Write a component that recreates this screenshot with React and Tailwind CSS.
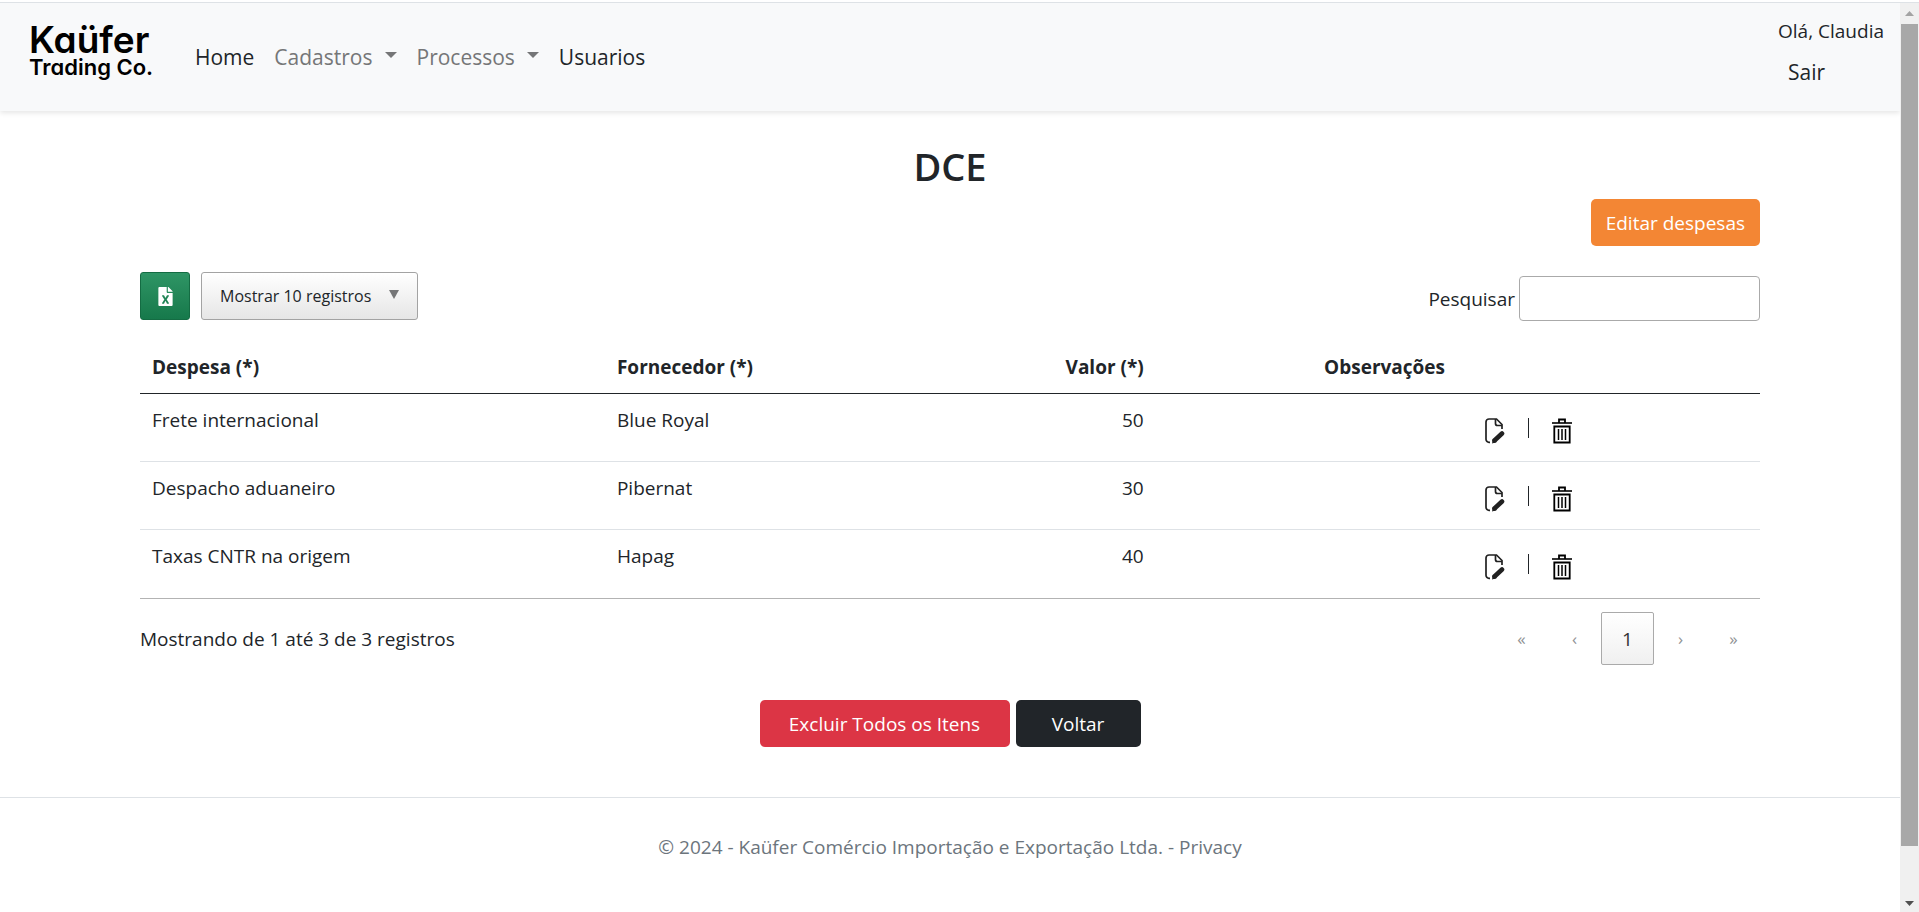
import { FaFileExcel } from "react-icons/fa";

const rows = [
  ["Frete internacional", "Blue Royal", 50],
  ["Despacho aduaneiro", "Pibernat", 30],
  ["Taxas CNTR na origem", "Hapag", 40],
];

function Logo() {
  return (
    <a href="#inicio" className="flex w-[124px] flex-col font-['Inter',sans-serif] font-semibold whitespace-nowrap text-black [font-feature-settings:'cv11']">
      <span className="text-[37px] leading-[32px]">Kaüfer</span>
      <span className="text-[22px] leading-[22px]">Trading Co.</span>
    </a>
  );
}

function Caret() {
  return (
    <svg width="12" height="6" viewBox="0 0 12 6" className="mb-1" aria-hidden="true">
      <path d="M0 0h12L6 6z" fill="currentColor" />
    </svg>
  );
}

function EditIcon() {
  return (
    <svg width="20" height="26" viewBox="0 0 20 26" fill="none" stroke="#212121" aria-hidden="true">
      <path d="M5 24.300H4A3 3 0 0 1 1 21.300V4A3 3 0 0 1 4 1H11.500L17 6.500V11" strokeWidth="1.700" />
      <path d="M10.500 1V5.500A2 2 0 0 0 12.500 7.500H17" strokeWidth="1.700" />
      <path d="M9.500 22.500L17 15.500" strokeWidth="4.600" strokeLinecap="round" />
      <path d="M7 25.500L8 20.500L12 24Z" fill="#212121" stroke="none" />
    </svg>
  );
}

function TrashIcon() {
  return (
    <svg width="20" height="26" viewBox="0 0 20 26" fill="none" stroke="#000" aria-hidden="true">
      <path d="M0 5H20" strokeWidth="1.600" />
      <path d="M7 5V1.500H13V5" strokeWidth="1.800" />
      <path d="M2.300 8.500H17.700V24.500H2.300Z" strokeWidth="1.800" />
      <path d="M6.500 11V22M10 11V22M13.500 11V22" strokeWidth="1.500" />
    </svg>
  );
}

export default function App() {
  return (
    <div className="flex h-screen flex-col overflow-hidden bg-white font-['Open_Sans',sans-serif] text-[19px] leading-[30px] text-[#212529]">
      <div className="mt-[2px] flex min-h-0 flex-1 border-t border-[#dee2e6]">
        <div className="min-w-0 flex-1 overflow-hidden">
          <header className="flex h-[108px] items-start justify-between bg-[#f8f9fa] shadow-[0_2px_5px_rgba(0,0,0,0.1)]">
            <div className="flex items-start pt-[21px] pl-[29px]">
              <Logo />
              <nav className="mt-[18px] ml-[32px] flex items-center text-[21px]">
                <a href="#home" className="px-[10px]">Home</a>
                <button type="button" className="flex items-center gap-[12px] px-[10px] text-[#757677]">Cadastros <Caret /></button>
                <button type="button" className="flex items-center gap-[12px] px-[10px] text-[#757677]">Processos <Caret /></button>
                <a href="#usuarios" className="px-[10px]">Usuarios</a>
              </nav>
            </div>
            <div className="pt-[13px] pr-[16px]">
              <p>Olá, Claudia</p>
              <a href="#sair" className="mt-[11px] block px-[10px] text-[21px]">Sair</a>
            </div>
          </header>

          <main className="mx-auto max-w-[1650px] px-[15px] pt-[31px]">
            <h1 className="text-center text-[38px] leading-[48px] font-semibold">DCE</h1>
            <div className="mt-[9px] flex justify-end">
              <button type="button" className="h-[47px] rounded-[5px] bg-[#f38634] px-[15px] text-white">Editar despesas</button>
            </div>

            <div className="mt-[26px] flex items-start justify-between">
              <div className="flex gap-[11px]">
                <button type="button" aria-label="Exportar para Excel" className="flex h-[48px] w-[50px] items-center justify-center rounded-[3px] border border-[#146c43] bg-linear-to-b from-[#2e9565] to-[#16794b] text-white">
                  <FaFileExcel size={19} />
                </button>
                <button type="button" className="flex h-[48px] w-[217px] items-center justify-between rounded-[3px] border border-[#a3a3a3] bg-linear-to-b from-white to-[#e6e6e6] px-[18px] text-[16px]">
                  Mostrar 10 registros
                  <svg width="10" height="9" viewBox="0 0 10 9" className="mb-[3px]" aria-hidden="true"><path d="M0 0h10L5 9z" fill="#757677" /></svg>
                </button>
              </div>
              <div className="mt-[4px] flex items-center gap-[4px]">
                <label htmlFor="pesquisar">Pesquisar</label>
                <input id="pesquisar" type="search" className="h-[45px] w-[241px] rounded-[4px] border border-[#aaa] bg-transparent px-[6px]" />
              </div>
            </div>

            <table className="mt-[20px] w-full table-fixed border-separate border-spacing-0 border-b border-[#b3b3b3]">
              <colgroup>
                <col className="w-[28.7%]" />
                <col className="w-[21.6%]" />
                <col className="w-[12.4%]" />
                <col className="w-[18.6%]" />
                <col />
              </colgroup>
              <thead>
                <tr className="h-[53px] text-left *:border-b *:border-[#212529] *:px-[12px] *:font-bold">
                  <th>Despesa (*)</th>
                  <th>Fornecedor (*)</th>
                  <th className="text-right">Valor (*)</th>
                  <th className="text-right">Observações</th>
                  <th aria-label="Ações"></th>
                </tr>
              </thead>
              <tbody>
                {rows.map(([despesa, fornecedor, valor]) => (
                  <tr key={despesa} className="h-[68px] align-top *:border-b *:border-[#dee2e6] last:*:border-b-0">
                    <td className="px-[12px] pt-[11px]">{despesa}</td>
                    <td className="px-[12px] pt-[11px]">{fornecedor}</td>
                    <td className="px-[12px] pt-[11px] text-right">{valor}</td>
                    <td></td>
                    <td className="pt-[24px] pl-[28px]">
                      <div className="flex items-start">
                        <a href="#editar" aria-label="Editar"><EditIcon /></a>
                        <span className="mx-[23px] h-[20px] w-px bg-[#212529]" />
                        <a href="#excluir" aria-label="Excluir"><TrashIcon /></a>
                      </div>
                    </td>
                  </tr>
                ))}
              </tbody>
            </table>

            <div className="mt-[13px] flex items-center justify-between">
              <p>Mostrando de 1 até 3 de 3 registros</p>
              <nav aria-label="Paginação" className="flex text-[17px] text-[#909294]">
                <button type="button" className="size-[53px]">«</button>
                <button type="button" className="size-[53px]">‹</button>
                <button type="button" className="size-[53px] rounded-[2px] border border-[#aaa] bg-linear-to-b from-white to-[#f0f0f0] text-[19px] text-[#333]">1</button>
                <button type="button" className="size-[53px]">›</button>
                <button type="button" className="size-[53px]">»</button>
              </nav>
            </div>

            <div className="mt-[35px] flex justify-center gap-[6px]">
              <button type="button" className="h-[47px] w-[250px] rounded-[5px] bg-[#dc3545] text-white">Excluir Todos os Itens</button>
              <button type="button" className="h-[47px] w-[125px] rounded-[5px] bg-[#212529] text-white">Voltar</button>
            </div>
          </main>

          <footer className="mt-[50px] border-t border-[#dee2e6] pt-[34px] text-center text-[#6c757d]">
            © 2024 - Kaüfer Comércio Importação e Exportação Ltda. - <a href="#privacy">Privacy</a>
          </footer>
        </div>

        <div aria-hidden="true" className="flex w-[19px] flex-col items-center justify-between bg-[#f0f0f0]">
          <div className="flex w-full flex-1 flex-col items-center">
            <svg width="9" height="5" viewBox="0 0 9 5" className="my-[8px] shrink-0"><path d="M0 5h9L4.500 0z" fill="#a3a3a3" /></svg>
            <div className="h-[91.5%] w-[17px] bg-[#a8a8a8]" />
          </div>
          <svg width="9" height="5" viewBox="0 0 9 5" className="mb-[6px] shrink-0"><path d="M0 0h9L4.500 5z" fill="#505050" /></svg>
        </div>
      </div>
    </div>
  );
}
